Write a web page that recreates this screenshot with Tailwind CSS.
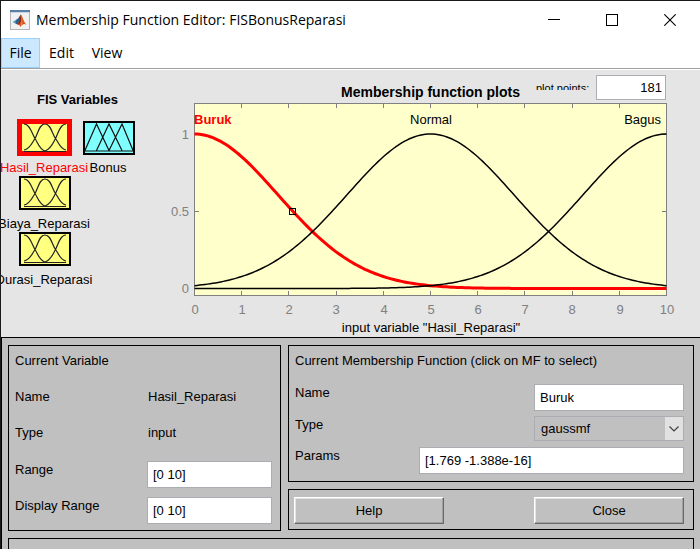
<!DOCTYPE html>
<html lang="en">
<head>
<meta charset="utf-8">
<title>Membership Function Editor: FISBonusReparasi</title>
<script src="https://cdn.jsdelivr.net/npm/@tailwindcss/browser@4"></script>
</head>
<body class="bg-[#c0c0c0]">
<div class="flex min-h-screen flex-col overflow-hidden border-t border-l border-[#1a1a1a] font-['Liberation_Sans',Arial,sans-serif] text-[13px] leading-[18px] text-black">

  <header class="flex h-[37px] items-center bg-white pl-[9px] font-['Open_Sans','Noto_Sans',sans-serif]">
    <svg class="size-5 shrink-0" viewBox="0 0 20 20" aria-hidden="true">
      <rect x="0.5" y="0.5" width="19" height="19" fill="#f1f1f1" stroke="#b4b4b4"/>
      <rect x="0" y="0" width="20" height="2" fill="#5b7fa8"/>
      <rect x="1" y="2" width="18" height="1" fill="#c9d6e4"/>
      <path d="M2.500 12 L6.500 9.500 L8.500 10.500 L6.500 14 Z" fill="#4f9bc0"/>
      <path d="M6.500 9.500 C8.500 9 9.500 5.500 11 4.500 L10 10 L7.500 14.500 L5.500 13.500 Z" fill="#2b5f8c"/>
      <path d="M11 4.500 C12.500 6.500 14 12 16.500 15 C14.500 13.500 13 13.500 10.500 17 C10 15.500 9 14.500 7.500 14.500 C9.500 12.500 10 7 11 4.500 Z" fill="#d9541e"/>
      <path d="M11 4.500 C11.500 8 11.500 11 10 13 C9.500 14 8.500 14.500 7.500 14.500 C9.500 12.500 10 7 11 4.500 Z" fill="#8c2414"/>
      <path d="M11 5 C12.500 8 12.500 11 12 14 L10.500 17 C12 12 12 9 11 5 Z" fill="#f5a43a"/>
    </svg>
    <h1 class="ml-[6px] text-[14px] whitespace-nowrap">Membership Function Editor: FISBonusReparasi</h1>
    <div class="ml-auto flex pr-px">
      <button type="button" aria-label="Minimize" class="flex h-[37px] w-[58px] items-center justify-center">
        <svg class="size-3" viewBox="0 0 12 12"><path d="M0 5.500H12" stroke="#000"/></svg>
      </button>
      <button type="button" aria-label="Maximize" class="flex h-[37px] w-[58px] items-center justify-center">
        <svg class="size-3" viewBox="0 0 12 12"><rect x="0.500" y="0.500" width="11" height="11" fill="none" stroke="#000"/></svg>
      </button>
      <button type="button" aria-label="Close window" class="flex h-[37px] w-[58px] items-center justify-center">
        <svg class="size-3" viewBox="0 0 12 12"><path d="M0.300 0.300L11.700 11.700M11.700 0.300L0.300 11.700" stroke="#000" stroke-width="1.100"/></svg>
      </button>
    </div>
  </header>

  <nav class="flex h-8 items-start border-b border-white bg-white font-['Open_Sans','Noto_Sans',sans-serif] text-[14px]">
    <div class="flex h-[31px] w-full border-b border-[#a0a0a0]">
      <button type="button" class="h-[30px] w-[39px] border border-[#99d1ff] bg-[#cce8ff]">File</button>
      <button type="button" class="h-[30px] w-[43px]">Edit</button>
      <button type="button" class="h-[30px] w-[48px]">View</button>
    </div>
  </nav>

  <main class="flex bg-[#e5e5e5]">
    <section class="w-[180px] shrink-0 pt-[21px]" aria-label="FIS Variables">
      <h2 class="w-[153px] text-center font-bold">FIS Variables</h2>
      <div class="mt-[10px] grid w-[140px] grid-cols-[64px_64px] pl-[11px]">
        <button type="button" class="flex h-14 flex-col items-center whitespace-nowrap text-[#f00]">
          <svg class="h-10 w-[55px] shrink-0 overflow-visible" viewBox="0 0 55 40">
            <rect x="2.500" y="2.500" width="50" height="32" fill="#ffff80" stroke="#f00" stroke-width="5"/>
            <path d="M7 5C13 5 15 15 18 19.500S22 30 28 32M49 5C43 5 41 15 38.500 19.500S34 30 28 32M7 31C13 30 15 24 18 19.500S22 5 28 5S35 15 38.500 19.500S43 30 49 31M7 32.500H49" fill="none" stroke="#222" stroke-width="1.200"/>
          </svg>
          <span>Hasil_Reparasi</span>
        </button>
        <button type="button" class="flex h-14 flex-col items-center whitespace-nowrap">
          <svg class="h-10 w-[55px] shrink-0" viewBox="0 0 55 40">
            <rect x="3" y="3" width="50" height="32" fill="#80ffff" stroke="#000" stroke-width="2"/>
            <path d="M3.500 32.500L15.500 5L28 31.500M15.500 31.500L28 5L41 31.500M28 31.500L41 5L52.500 32.500M3.500 32H52.500" fill="none" stroke="#111" stroke-width="1.200"/>
          </svg>
          <span>Bonus</span>
        </button>
        <button type="button" class="col-start-1 flex h-14 flex-col items-center whitespace-nowrap">
          <svg class="h-10 w-[55px] shrink-0" viewBox="0 0 55 40">
            <rect x="3" y="2" width="50" height="32" fill="#ffff80" stroke="#000" stroke-width="2"/>
            <path d="M7 4C13 4 15 14 18 18.500S22 29 28 31M49 4C43 4 41 14 38.500 18.500S34 29 28 31M7 30C13 29 15 23 18 18.500S22 4 28 4S35 14 38.500 18.500S43 29 49 30M7 31.500H49" fill="none" stroke="#222" stroke-width="1.200"/>
          </svg>
          <span>Biaya_Reparasi</span>
        </button>
        <button type="button" class="col-start-1 flex h-14 flex-col items-center whitespace-nowrap">
          <svg class="h-10 w-[55px] shrink-0" viewBox="0 0 55 40">
            <rect x="3" y="2" width="50" height="32" fill="#ffff80" stroke="#000" stroke-width="2"/>
            <path d="M7 4C13 4 15 14 18 18.500S22 29 28 31M49 4C43 4 41 14 38.500 18.500S34 29 28 31M7 30C13 29 15 23 18 18.500S22 4 28 4S35 14 38.500 18.500S43 29 49 30M7 31.500H49" fill="none" stroke="#222" stroke-width="1.200"/>
          </svg>
          <span>Durasi_Reparasi</span>
        </button>
      </div>
    </section>

    <section class="min-w-0 flex-1" aria-label="Membership function plots">
      <div class="flex h-[31px] items-start justify-end pt-[5px] pr-[34px]">
        <h2 class="mt-2 text-[14px] font-bold whitespace-nowrap">Membership function plots</h2>
        <label for="points" class="mt-1 ml-4 h-[11px] w-[60px] overflow-hidden text-[11px] whitespace-nowrap">plot points:</label>
        <input id="points" type="text" value="181" class="h-[25px] w-[70px] border border-[#abadb3] bg-white px-[3px] text-right">
      </div>
      <svg class="block w-full overflow-visible" viewBox="181 101 519 236" role="img" aria-label="Membership functions of Hasil_Reparasi">
        <rect x="194.500" y="103.500" width="472" height="192" fill="#ffffcc" stroke="#808080"/>
        <path id="ticks" stroke="#808080" fill="none"/>
        <path id="buruk" fill="none" stroke="#f00" stroke-width="3"/>
        <path id="normal" fill="none" stroke="#000" stroke-width="1.500"/>
        <path id="bagus" fill="none" stroke="#000" stroke-width="1.500"/>
        <rect x="289.500" y="208.500" width="6" height="6" fill="none" stroke="#000"/>
        <g font-size="13" fill="#000">
          <text x="194" y="124" font-weight="bold" fill="#f00">Buruk</text>
          <text x="431" y="124" text-anchor="middle">Normal</text>
          <text x="661" y="124" text-anchor="end">Bagus</text>
          <text x="431" y="332" text-anchor="middle">input variable "Hasil_Reparasi"</text>
        </g>
        <g font-size="13" fill="#808080" text-anchor="end">
          <text x="189" y="139">1</text>
          <text x="189" y="216">0.5</text>
          <text x="189" y="293">0</text>
        </g>
        <g font-size="13" fill="#808080" text-anchor="middle">
          <text x="195" y="314">0</text>
          <text x="242" y="314">1</text>
          <text x="289" y="314">2</text>
          <text x="336" y="314">3</text>
          <text x="384" y="314">4</text>
          <text x="431" y="314">5</text>
          <text x="478" y="314">6</text>
          <text x="525" y="314">7</text>
          <text x="572" y="314">8</text>
          <text x="620" y="314">9</text>
          <text x="667" y="314">10</text>
        </g>
      </svg>
    </section>
  </main>

  <div class="flex-1 border-t border-l border-black bg-[#c0c0c0] px-[6px] pt-[7px]">
    <div class="flex gap-[7px]">
      <section class="w-[273px] shrink-0 border border-black pt-[6px] pr-2 pb-[6px] pl-[6px]">
        <h2 class="h-9">Current Variable</h2>
        <div class="flex h-9"><span class="w-[133px]">Name</span><span>Hasil_Reparasi</span></div>
        <div class="flex h-9"><span class="w-[133px]">Type</span><span>input</span></div>
        <div class="mt-px flex items-start">
          <label for="range" class="w-[132px] shrink-0">Range</label>
          <input id="range" type="text" value="[0 10]" class="h-[27px] min-w-0 flex-1 border border-[#abadb3] bg-white px-[5px]">
        </div>
        <div class="mt-[9px] flex items-start">
          <label for="drange" class="w-[132px] shrink-0">Display Range</label>
          <input id="drange" type="text" value="[0 10]" class="h-[27px] min-w-0 flex-1 border border-[#abadb3] bg-white px-[5px]">
        </div>
      </section>

      <div class="flex min-w-0 flex-1 flex-col gap-[7px]">
        <section class="border border-black pt-[6px] pr-[9px] pb-[7px] pl-[6px]">
          <h2 class="h-8 whitespace-nowrap">Current Membership Function (click on MF to select)</h2>
          <div class="flex items-start justify-between">
            <label for="mfname">Name</label>
            <input id="mfname" type="text" value="Buruk" class="h-[27px] w-[150px] border border-[#abadb3] bg-white px-[5px]">
          </div>
          <div class="mt-[5px] flex items-start justify-between">
            <label for="mftype">Type</label>
            <div class="relative">
              <select id="mftype" class="block h-[25px] w-[150px] appearance-none border border-[#abadb3] bg-[#c0c0c0] px-[6px]">
                <option>gaussmf</option>
              </select>
              <svg class="pointer-events-none absolute top-px right-px h-[23px] w-[18px] bg-[#e1e1e1]" viewBox="0 0 18 23" aria-hidden="true"><path d="M4.500 9.500L9 14L13.500 9.500" fill="none" stroke="#404040" stroke-width="1.200"/></svg>
            </div>
          </div>
          <div class="mt-[6px] flex items-start justify-between">
            <label for="params">Params</label>
            <input id="params" type="text" value="[1.769 -1.388e-16]" class="h-[27px] w-[265px] border border-[#abadb3] bg-white px-[5px]">
          </div>
        </section>
        <section class="flex justify-between border border-black pt-[7px] pr-[9px] pb-[5px] pl-[5px]">
          <button type="button" class="h-[27px] w-[150px] border border-t-white border-r-[#696969] border-b-[#696969] border-l-white bg-[#c0c0c0] shadow-[inset_-1px_-1px_0_#a0a0a0,inset_1px_1px_0_#e3e3e3]">Help</button>
          <button type="button" class="h-[27px] w-[150px] border border-t-white border-r-[#696969] border-b-[#696969] border-l-white bg-[#c0c0c0] shadow-[inset_-1px_-1px_0_#a0a0a0,inset_1px_1px_0_#e3e3e3]">Close</button>
        </section>
      </div>
    </div>
    <div class="mt-[7px] h-[11px] border-x border-t border-black"></div>
  </div>
</div>

<script>
  // Gaussian membership functions sampled at 181 points over [0, 10].
  const sigma = 1.769, points = 181;
  const px = x => 194.5 + 47.2 * x;
  const py = y => 288.5 - 154.5 * y;
  const curve = c => Array.from({ length: points }, (_, i) => {
    const x = 10 * i / (points - 1);
    return (i ? 'L' : 'M') + px(x).toFixed(2) + ' ' + py(Math.exp(-((x - c) ** 2) / (2 * sigma * sigma))).toFixed(2);
  }).join('');
  document.getElementById('buruk').setAttribute('d', curve(0));
  document.getElementById('normal').setAttribute('d', curve(5));
  document.getElementById('bagus').setAttribute('d', curve(10));

  let ticks = '';
  for (let i = 1; i < 10; i++) {
    const x = Math.floor(px(i)) + 0.5;
    ticks += `M${x} 103V108M${x} 296V291`;
  }
  for (const y of [134.5, 211.5, 288.5]) ticks += `M194 ${y}H199M667 ${y}H662`;
  document.getElementById('ticks').setAttribute('d', ticks);
</script>
</body>
</html>
